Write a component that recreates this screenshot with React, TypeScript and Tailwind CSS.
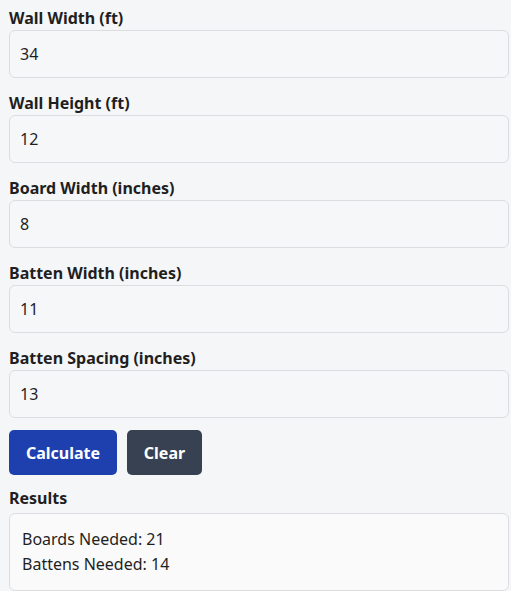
import { useState } from 'react';

const fields = [
  { label: 'Wall Width (ft)', value: '34' },
  { label: 'Wall Height (ft)', value: '12' },
  { label: 'Board Width (inches)', value: '8' },
  { label: 'Batten Width (inches)', value: '11' },
  { label: 'Batten Spacing (inches)', value: '13' },
];

export default function App() {
  const [values, setValues] = useState(fields.map((f) => f.value));

  return (
    <div
      className="min-h-[591px] bg-[#f5f6f8] pt-[6px] pl-[9px] text-[#1f1f1f]"
      style={{ fontFamily: '"Noto Sans", "Open Sans", sans-serif' }}
    >
      <div className="w-[500px]">
        {fields.map((f, i) => (
          <div key={f.label} className={i === fields.length - 1 ? 'mb-[12px]' : 'mb-[13px]'}>
            <label className="block text-[16px] leading-[24px] font-bold">{f.label}</label>
            <input
              value={values[i]}
              onChange={(e) => {
                const next = [...values];
                next[i] = e.target.value;
                setValues(next);
              }}
              className="block h-[48px] w-full rounded-[6px] border border-[#dcdde1] bg-[#f6f7f9] px-[10px] text-[16px] outline-none"
            />
          </div>
        ))}
        <div className="flex gap-[10px]">
          <button className="h-[45px] w-[108px] rounded-[5px] bg-[#1e40af] text-[16px] font-bold text-white">
            Calculate
          </button>
          <button className="h-[45px] w-[75px] rounded-[5px] bg-[#374151] text-[16px] font-bold text-white">
            Clear
          </button>
        </div>
        <div className="mt-[11px] text-[16px] leading-[24px] font-bold">Results</div>
        <div className="mt-[3px] rounded-[6px] border border-[#dcdde1] bg-[#fafafa] px-[12px] pt-[13px] pb-[13px] text-[16px] leading-[25px]">
          <div>Boards Needed: 21</div>
          <div>Battens Needed: 14</div>
        </div>
      </div>
    </div>
  );
}
